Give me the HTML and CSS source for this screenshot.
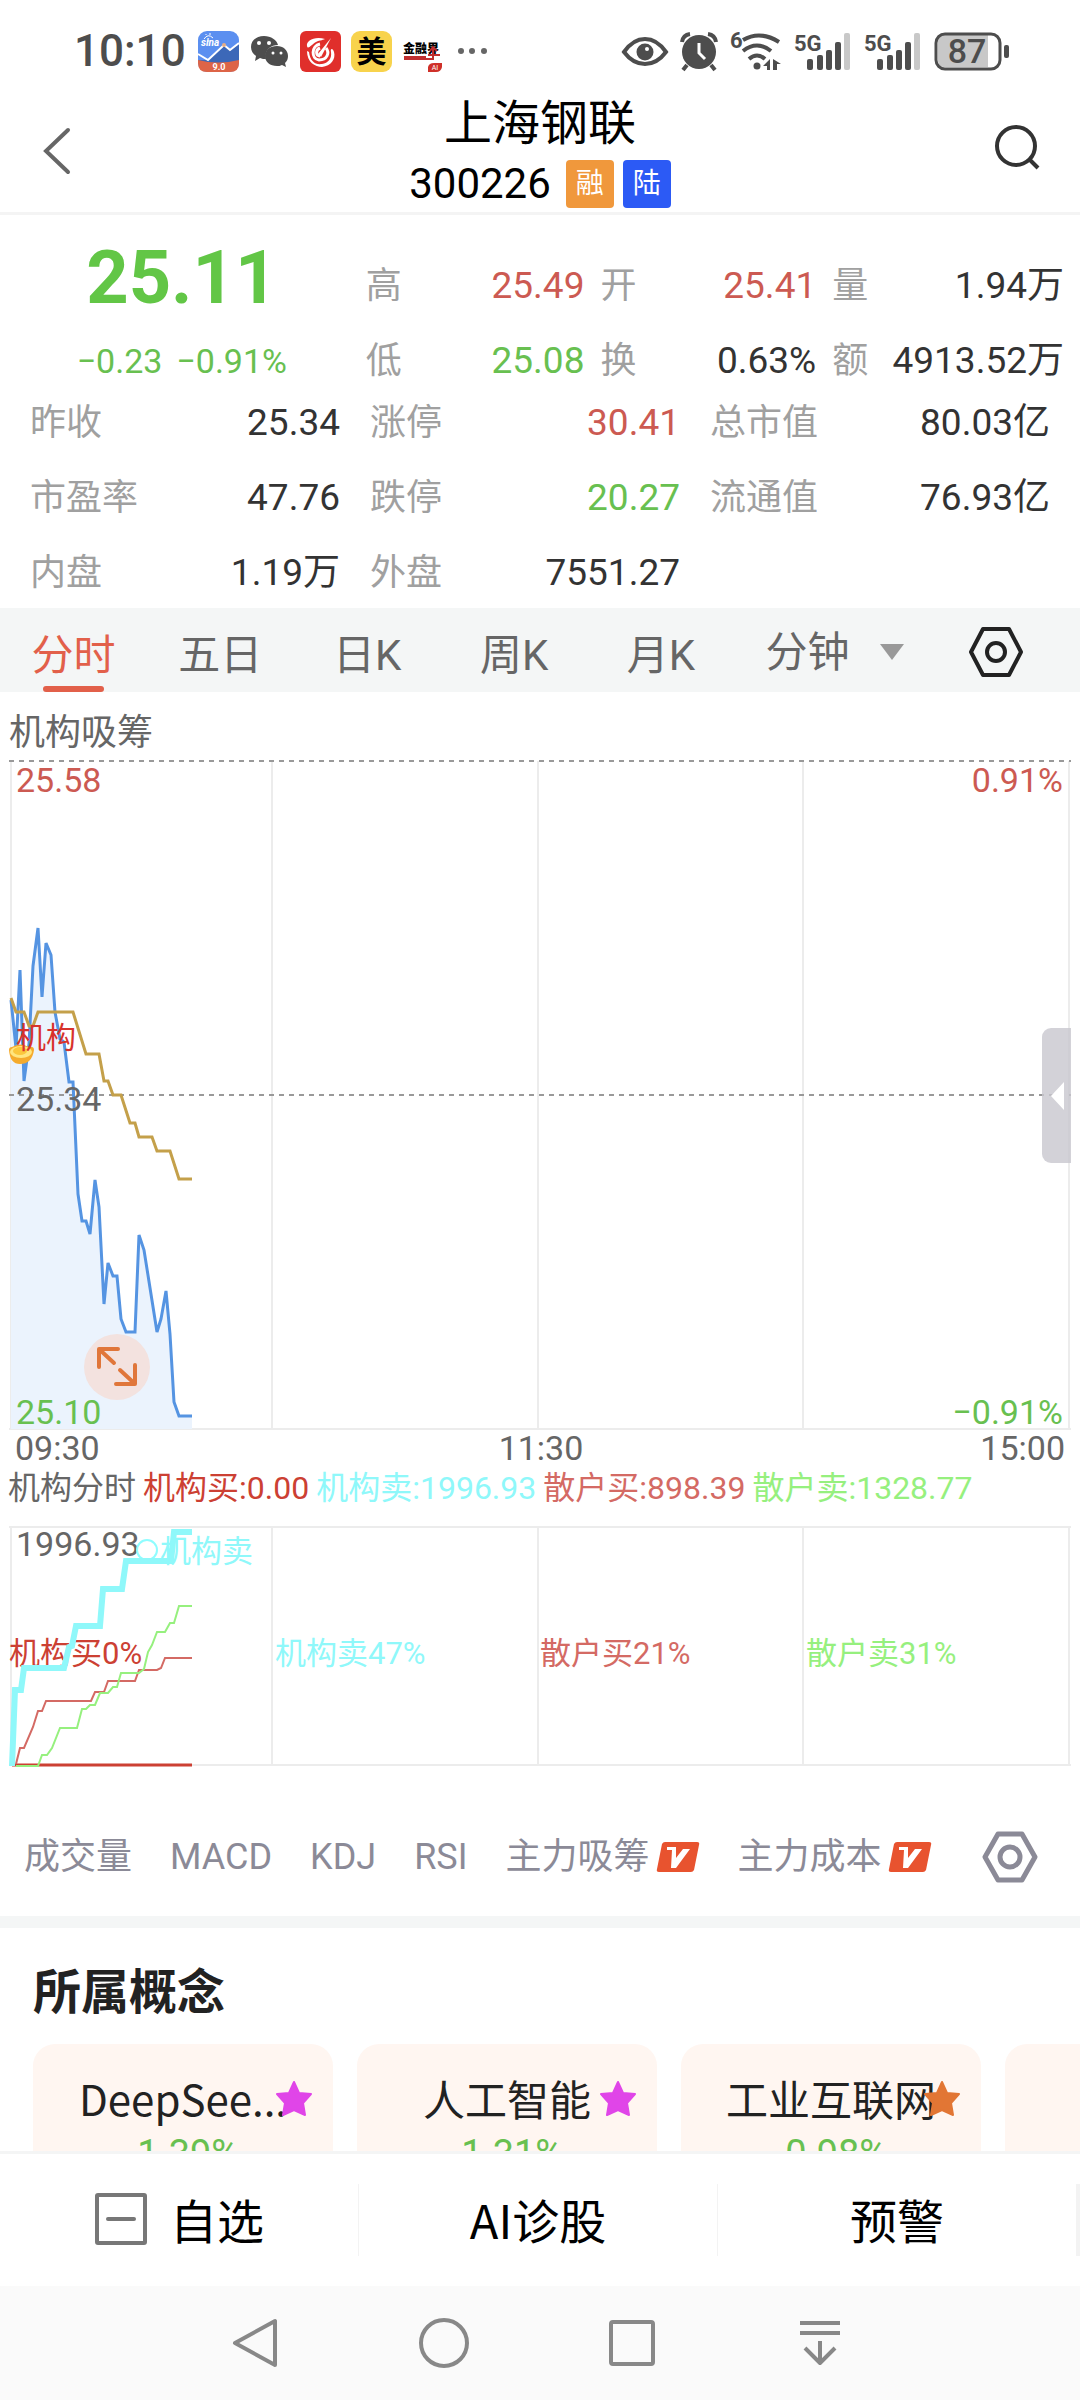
FILE: index.html
```html
<!DOCTYPE html>
<html lang="zh-CN">
<head>
  <meta charset="utf-8" />
  <meta name="viewport" content="width=device-width, initial-scale=1" />
  <title>上海钢联 300226</title>
  <link rel="stylesheet" href="styles.css">
</head>
<body>
  <div class="status-bar">
    <span class="clock">10:10</span>
    <svg class="app" viewBox="0 0 41 41">
      <rect width="41" height="41" rx="9" fill="#5b8ff0"/>
      <path d="M0 29 L10 29 L26 15 L32 19 L41 13 V32 H0z" fill="#3c68b8"/>
      <path d="M0 29 Q20 34 41 29 V32 Q41 41 32 41 H9 Q0 41 0 32z" fill="#dd6447"/>
      <path d="M0 23 L10 29 L26 14 L32 19 L41 12" fill="none" stroke="#fff" stroke-width="2"/>
      <circle cx="26" cy="14" r="2" fill="#e5ad85"/>
      <path d="M6 8 Q10 2 15 7 M10 8v3 M8 4v-1 M12 4v-2" fill="none" stroke="#fff" stroke-width="1"/>
      <text x="3" y="15" class="sina">sina</text>
      <text x="21" y="39" text-anchor="middle" class="ver">9.0</text>
    </svg>
    <svg class="app" viewBox="0 0 41 41">
      <path d="M15 5c-8 0-13 5-13 11 0 4 2 7 5 9l-1 5 5-3c2 1 4 1 6 1-2-8 4-14 12-14C28 9 22 5 15 5z" fill="#4d4d4d"/>
      <path d="M28 15c-7 0-12 4-12 10s5 10 12 10c2 0 3 0 5-1l4 2-1-4c2-2 3-4 3-7 0-6-5-10-11-10z" fill="#4d4d4d"/>
      <g fill="#fff"><circle cx="10" cy="12" r="2"/><circle cx="20" cy="12" r="2"/><circle cx="24" cy="22" r="1.5"/><circle cx="32" cy="22" r="1.5"/></g>
    </svg>
    <svg class="app" viewBox="0 0 41 41">
      <rect width="41" height="41" rx="6" fill="#e02f2b"/>
      <path d="M25 8 C14 5 6 10 7 15 C8 19 11 14 16 11 C20 9 24 9 25 8z" fill="#fff"/>
      <path d="M7 20 C7 31 15 36 22 36 C31 35 36 28 34 21 C33 17 30 17 31 21 C32 28 28 32 22 33 C15 34 10 30 9 21z" fill="#fff"/>
      <path d="M31 7 L21 26 L18 23z" fill="#fff"/>
      <path d="M20 13 C11 15 11 28 19 29 C27 29 30 22 26 17 M20 17 C15 19 16 25 20 25" fill="none" stroke="#fff" stroke-width="3"/>
    </svg>
    <svg class="app" viewBox="0 0 41 41">
      <rect width="41" height="41" rx="9" fill="#f8d34c"/>
      <text x="20.5" y="31" text-anchor="middle" class="mei">美</text>
    </svg>
    <svg class="app" viewBox="0 0 41 41">
      <text x="1" y="22" class="jrj">金融界</text>
      <path d="M2 26H24 M2 28H24 M26 24H38 M31 17V28H24 M28 20l3-4 4 4" fill="none" stroke="#c02f2f" stroke-width="2"/>
      <path d="M26 41V36Q27 32 32 32H40V36Q39 41 34 41z" fill="#cf3029"/>
      <text x="33" y="39" text-anchor="middle" class="ai">AI</text>
    </svg>
    <svg class="more" viewBox="0 0 30 41" fill="#666"><circle cx="4" cy="20" r="3"/><circle cx="15" cy="20" r="3"/><circle cx="27" cy="20" r="3"/></svg>

    <div class="system">
      <svg width="46" height="40" viewBox="0 0 46 40">
        <path d="M2 21 Q11 8 23 8 Q35 8 44 21 Q35 33 23 33 Q11 33 2 21z" fill="none" stroke="#4d4d4d" stroke-width="4"/>
        <circle cx="23" cy="21" r="8.500" fill="#4d4d4d"/><circle cx="25" cy="18" r="2" fill="#fff"/>
      </svg>
      <svg width="38" height="40" viewBox="0 0 38 40">
        <circle cx="19" cy="21" r="17" fill="#4d4d4d"/>
        <path d="M2 11 Q3 4 10 3 M36 11 Q35 4 28 3 M7 34l-4 5 M31 34l4 5" stroke="#4d4d4d" stroke-width="4" fill="none"/>
        <path d="M19 12v10l6 6" fill="none" stroke="#fff" stroke-width="3"/>
      </svg>
      <svg width="52" height="40" viewBox="0 0 52 40">
        <text x="0" y="17" class="net">6</text>
        <g fill="none" stroke="#4d4d4d" stroke-width="4"><path d="M13 9 Q30 -1 49 11"/><path d="M13 20 Q27 9 41 20"/><path d="M19 28 Q27 21 35 28"/></g>
        <circle cx="27" cy="35" r="3.500" fill="#4d4d4d"/>
        <path d="M33 35 L40 28V39H37V35z M43 28 L51 33 H47V39H43z" fill="#4d4d4d"/>
      </svg>
      <svg width="58" height="40" viewBox="0 0 58 40">
        <text x="0" y="20" class="net">5G</text>
        <g fill="#4d4d4d"><rect x="13" y="28" width="6" height="11" rx="2"/><rect x="23" y="24" width="6" height="15" rx="2"/><rect x="32" y="19" width="6" height="20" rx="2"/><rect x="41" y="11" width="6" height="28" rx="2"/></g>
        <rect x="50" y="2" width="6" height="37" rx="2" fill="#c8c8c8"/>
      </svg>
      <svg width="58" height="40" viewBox="0 0 58 40">
        <text x="0" y="20" class="net">5G</text>
        <g fill="#4d4d4d"><rect x="13" y="28" width="6" height="11" rx="2"/><rect x="23" y="24" width="6" height="15" rx="2"/><rect x="32" y="19" width="6" height="20" rx="2"/><rect x="41" y="11" width="6" height="28" rx="2"/></g>
        <rect x="50" y="2" width="6" height="37" rx="2" fill="#c8c8c8"/>
      </svg>
      <svg width="76" height="40" viewBox="0 0 76 40">
        <path d="M10 4H54V36H10Q4 36 4 30V10Q4 4 10 4z" fill="#c8c8c8"/>
        <rect x="2" y="3" width="64" height="35" rx="9" fill="none" stroke="#4d4d4d" stroke-width="3"/>
        <rect x="70" y="14" width="5" height="13" rx="2" fill="#4d4d4d"/>
        <text x="33" y="32" text-anchor="middle" class="battery">87</text>
      </svg>
    </div>
  </div>

  <header class="header">
    <button class="icon-btn" aria-label="返回">
      <svg width="48" height="50" viewBox="0 0 48 50"><path d="M30 4 L8 25 L30 46" fill="none" stroke="#666" stroke-width="4" stroke-linecap="round"/></svg>
    </button>
    <div class="title">
      <h1>上海钢联</h1>
      <div class="code">300226 <span class="badge margin">融</span><span class="badge connect">陆</span></div>
    </div>
    <button class="icon-btn" aria-label="搜索">
      <svg width="48" height="50" viewBox="0 0 48 50" fill="none" stroke="#333" stroke-width="4"><circle cx="22" cy="20" r="19"/><path d="M35 33 L44 42"/></svg>
    </button>
  </header>

  <main class="content">
    <section class="quote">
      <div class="quote-top">
        <div class="price down">25.11</div>
        <div class="stat"><span>高</span><b class="up">25.49</b></div>
        <div class="stat"><span>开</span><b class="up">25.41</b></div>
        <div class="stat"><span>量</span><b>1.94万</b></div>
        <div class="change down"><span>−0.23</span><span>−0.91%</span></div>
        <div class="stat"><span>低</span><b class="down">25.08</b></div>
        <div class="stat"><span>换</span><b>0.63%</b></div>
        <div class="stat"><span>额</span><b>4913.52万</b></div>
      </div>
      <div class="quote-more">
        <div class="stat"><span>昨收</span><b>25.34</b></div>
        <div class="stat"><span>涨停</span><b class="up">30.41</b></div>
        <div class="stat"><span>总市值</span><b>80.03亿</b></div>
        <div class="stat"><span>市盈率</span><b>47.76</b></div>
        <div class="stat"><span>跌停</span><b class="down">20.27</b></div>
        <div class="stat"><span>流通值</span><b>76.93亿</b></div>
        <div class="stat"><span>内盘</span><b>1.19万</b></div>
        <div class="stat"><span>外盘</span><b>7551.27</b></div>
      </div>
    </section>

    <nav class="tabs">
      <button class="tab active">分时</button>
      <button class="tab">五日</button>
      <button class="tab">日K</button>
      <button class="tab">周K</button>
      <button class="tab">月K</button>
      <div class="tab-tools">
        <label class="minutes">
          <select aria-label="分钟"><option>分钟</option></select>
          <svg width="24" height="16" viewBox="0 0 24 16"><path d="M0 0H24L12 16z" fill="#999"/></svg>
        </label>
        <button class="icon-btn" aria-label="图表设置">
          <svg width="56" height="52" viewBox="0 0 56 52" fill="none" stroke="#222" stroke-width="4" stroke-linejoin="round"><path d="M15 3H41L53 26L41 49H15L3 26z"/><circle cx="28" cy="26" r="9"/></svg>
        </button>
      </div>
    </nav>

    <p class="chart-name">机构吸筹</p>
    <div class="chart">
      <svg class="plot" viewBox="0 756 1080 714">
        <g class="grid"><path d="M11 761V1429 M272 761V1429 M538 761V1429 M803 761V1429 M1069 761V1429 M9 1429H1071"/></g>
        <path class="area" d="M11 1000 16 1048 20 970 24 1081 29 1044 33 966 38 928 42 997 46 943 51 955 55 1012 60 1039 64 1042 69 1082 73 1082 78 1194 82 1221 86 1221 90 1234 95 1180 99 1207 104 1304 108 1263 113 1276 117 1276 121 1319 126 1332 135 1332 139 1235 144 1250 157 1332 161 1319 166 1291 170 1334 174 1402 179 1416 192 1416V1429H11z"/>
        <path class="dash" d="M9 761H1071 M9 1095H1071"/>
        <path class="line-price" d="M11 1000 16 1048 20 970 24 1081 29 1044 33 966 38 928 42 997 46 943 51 955 55 1012 60 1039 64 1042 69 1082 73 1082 78 1194 82 1221 86 1221 90 1234 95 1180 99 1207 104 1304 108 1263 113 1276 117 1276 121 1319 126 1332 135 1332 139 1235 144 1250 157 1332 161 1319 166 1291 170 1334 174 1402 179 1416 192 1416"/>
        <path class="line-avg" d="M11 998 16 1012 24 1012 29 1026 33 1026 38 1012 73 1012 86 1054 99 1054 104 1081 108 1081 113 1095 121 1095 130 1123 135 1123 139 1137 152 1137 157 1151 170 1151 179 1179 192 1179"/>
        <!-- gold ingot marker -->
        <path d="M9 1050 Q10 1064 20 1064 Q32 1064 34 1050 Q34 1046 29 1047 Q20 1042 12 1047 Q9 1047 9 1050z" fill="#f5ab2c"/>
        <ellipse cx="21" cy="1052" rx="11" ry="6" fill="#ffe680"/>
        <ellipse cx="20" cy="1051" rx="7" ry="4" fill="#fbc73c"/>
        <text class="mark" x="16" y="1048">机构</text>
        <text class="tick up" x="16" y="792">25.58</text>
        <text class="tick up" x="1063" y="792" text-anchor="end">0.91%</text>
        <text class="tick" x="16" y="1111">25.34</text>
        <text class="tick down" x="16" y="1424">25.10</text>
        <text class="tick down" x="1063" y="1424" text-anchor="end">−0.91%</text>
        <text class="tick" x="15" y="1460">09:30</text>
        <text class="tick" x="541" y="1460" text-anchor="middle">11:30</text>
        <text class="tick" x="1065" y="1460" text-anchor="end">15:00</text>
      </svg>
      <button class="expand" aria-label="全屏">
        <svg width="66" height="66" viewBox="0 0 66 66" fill="none" stroke="#e0763a" stroke-width="4" stroke-linecap="round" stroke-linejoin="round"><path d="M15 33V15H34 M16 16L30 29 M51 31V50H32 M50 49L36 36"/></svg>
      </button>
      <button class="drawer" aria-label="展开侧栏">
        <svg width="13" height="28" viewBox="0 0 13 28"><path d="M0 14L13 0V28z" fill="#fff"/></svg>
      </button>
    </div>

    <div class="legend">
      <span>机构分时</span>
      <span class="inst-buy">机构买:0.00</span>
      <span class="inst-sell">机构卖:1996.93</span>
      <span class="retail-buy">散户买:898.39</span>
      <span class="retail-sell">散户卖:1328.77</span>
    </div>
    <svg class="plot" viewBox="0 1506 1080 274">
      <g class="grid"><path d="M11 1527V1765 M272 1527V1765 M538 1527V1765 M803 1527V1765 M1069 1527V1765 M9 1527H1071 M9 1765H1071"/></g>
      <g class="share">
        <text class="inst-buy" x="9" y="1664">机构买0%</text>
        <text class="inst-sell" x="275" y="1664">机构卖47%</text>
        <text class="retail-buy" x="540" y="1664">散户买21%</text>
        <text class="retail-sell" x="806" y="1664">散户卖31%</text>
        <text class="inst-sell" x="160" y="1562">机构卖</text>
      </g>
      <text class="tick" x="16" y="1556">1996.93</text>
      <circle cx="147" cy="1550" r="10" fill="none" stroke="#8ffdff" stroke-width="2"/>
      <path class="flow inst-buy thick" d="M12 1765H192"/>
      <path class="flow retail-buy" d="M16 1764 20 1748 24 1748 33 1727 38 1711 42 1711 46 1701 91 1701 95 1692 104 1692 108 1681 135 1681 139 1670 157 1670 161 1668 165 1658 192 1658"/>
      <path class="flow retail-sell" d="M16 1766H38L42 1755 47 1755 52 1748 60 1728 77 1728 82 1709 86 1709 90 1705 95 1705 100 1693 108 1693 113 1687 117 1687 121 1673 139 1673 144 1669 148 1652 152 1645 157 1632 165 1632 170 1623 174 1623 179 1606 192 1606"/>
      <path class="flow inst-sell heavy" d="M12 1766 15 1690 21 1690 24 1668 64 1668 69 1647 72 1646 76 1626 100 1626 103 1589 122 1589 126 1561 171 1561 174 1532 192 1532"/>
    </svg>

    <nav class="indicators">
      <button>成交量</button>
      <button>MACD</button>
      <button>KDJ</button>
      <button>RSI</button>
      <button>主力吸筹<svg width="44" height="32" viewBox="0 0 44 32"><path d="M9 1H41Q44 1 43 4L38 29Q37 31 35 31H3Q0 31 1 28L6 3Q7 1 9 1z" fill="#e8532f"/><path d="M11 6H20V17L27 8H34L20 27H15L16 9H11z" fill="#fff"/></svg></button>
      <button>主力成本<svg width="44" height="32" viewBox="0 0 44 32"><path d="M9 1H41Q44 1 43 4L38 29Q37 31 35 31H3Q0 31 1 28L6 3Q7 1 9 1z" fill="#e8532f"/><path d="M11 6H20V17L27 8H34L20 27H15L16 9H11z" fill="#fff"/></svg></button>
      <button class="settings" aria-label="指标设置">
        <svg width="56" height="52" viewBox="0 0 56 52" fill="none" stroke="#8b8a97" stroke-width="5" stroke-linejoin="round"><path d="M16 3H40L53 26L40 49H16L3 26z"/><circle cx="28" cy="26" r="10"/></svg>
      </button>
    </nav>

    <section class="concepts">
      <h2>所属概念</h2>
      <div class="cards">
        <a class="card" href="#"><span>DeepSee...</span><b class="down">-1.39%</b>
          <svg class="star" viewBox="0 0 36 36"><path d="M18 1L23 12L35 13L27 22L29 34L18 29L7 34L9 22L1 13L13 12z" fill="#e045e8" stroke="#e045e8" stroke-width="2" stroke-linejoin="round"/></svg></a>
        <a class="card" href="#"><span>人工智能</span><b class="down">-1.31%</b>
          <svg class="star" viewBox="0 0 36 36"><path d="M18 1L23 12L35 13L27 22L29 34L18 29L7 34L9 22L1 13L13 12z" fill="#e045e8" stroke="#e045e8" stroke-width="2" stroke-linejoin="round"/></svg></a>
        <a class="card" href="#"><span>工业互联网</span><b class="down">-0.98%</b>
          <svg class="star" viewBox="0 0 36 36"><path d="M18 1L23 12L35 13L27 22L29 34L18 29L7 34L9 22L1 13L13 12z" fill="#e27634" stroke="#e27634" stroke-width="2" stroke-linejoin="round"/></svg></a>
        <a class="card" href="#" aria-label="更多概念"></a>
      </div>
    </section>
  </main>

  <div class="actions">
    <button>
      <svg width="54" height="54" viewBox="0 0 54 54" fill="none" stroke="#777" stroke-width="4"><rect x="3" y="3" width="48" height="48" rx="1"/><path d="M14 27H40" stroke-linecap="round"/></svg>
      自选
    </button>
    <button>AI诊股</button>
    <button>预警</button>
  </div>

  <div class="system-nav">
    <button aria-label="后退"><svg width="52" height="52" viewBox="0 0 52 52"><path d="M45 4V48L5 26z"/></svg></button>
    <button aria-label="主页"><svg width="52" height="52" viewBox="0 0 52 52"><circle cx="26" cy="26" r="23"/></svg></button>
    <button aria-label="最近任务"><svg width="52" height="52" viewBox="0 0 52 52"><rect x="5" y="5" width="42" height="42" rx="2"/></svg></button>
    <button aria-label="下拉通知"><svg width="52" height="52" viewBox="0 0 52 52"><path d="M6 6H46 M6 16H46 M26 24V46 M11 31L26 46L41 31"/></svg></button>
  </div>
</body>
</html>
```
FILE: styles.css
```css
* {
  box-sizing: border-box;
}
body {
  margin: 0;
  height: 100vh;
  display: flex;
  flex-direction: column;
  background: #fff;
  color: #333;
  font-family: Roboto, "Noto Sans CJK SC", sans-serif;
}
button,
select {
  padding: 0;
  border: none;
  background: none;
  color: inherit;
  font: inherit;
  cursor: pointer;
}
svg {
  display: block;
  flex: none;
  overflow: visible;
}
.up {
  color: #cc5a52;
  fill: #cc5a52;
}
.down {
  color: #68c050;
  fill: #68c050;
}

/* status bar */
.status-bar {
  display: flex;
  align-items: center;
  gap: 10px;
  height: 100px;
  padding: 2px 70px 0 74px;
}
.clock {
  margin-right: 2px;
  font-size: 44px;
  font-weight: 500;
  color: #4d4d4d;
}
.app {
  width: 41px;
  height: 41px;
}
.more {
  width: 30px;
  height: 41px;
  margin-left: 4px;
}
.sina {
  font-size: 10px;
  font-weight: bold;
  font-style: italic;
  fill: #fff;
}
.ver {
  font-size: 9px;
  font-weight: bold;
  fill: #fff;
}
.mei {
  font-size: 30px;
  font-weight: bold;
}
.jrj {
  font-size: 12px;
  font-weight: 900;
}
.ai {
  font-size: 7px;
  fill: #fff;
}
.net {
  font-size: 22px;
  font-weight: bold;
  fill: #4d4d4d;
}
.battery {
  font-size: 34px;
  font-weight: 500;
  fill: #4d4d4d;
}
.system {
  display: flex;
  gap: 12px;
  margin-left: auto;
}

/* header */
.header {
  display: flex;
  align-items: flex-start;
  justify-content: space-between;
  padding: 0 38px 2px;
  border-bottom: 3px solid #f4f4f4;
}
.icon-btn {
  line-height: 0;
}
.header .icon-btn {
  margin-top: 26px;
}
.title {
  text-align: center;
}
.title h1 {
  margin: 0;
  font-size: 48px;
  font-weight: 400;
  line-height: 48px;
  color: #000;
}
.code {
  display: flex;
  align-items: center;
  justify-content: center;
  gap: 9px;
  margin-top: 10px;
  font-size: 42px;
  line-height: 52px;
  color: #000;
}
.badge {
  width: 48px;
  height: 48px;
  border-radius: 4px;
  font-size: 28px;
  line-height: 48px;
  color: #fff;
}
.badge.margin {
  margin-left: 6px;
  background: #f0983c;
}
.badge.connect {
  background: #2c5af5;
}

/* scrolled area between the header and the action bar */
.content {
  flex: 1;
  min-height: 0;
  overflow: hidden;
}

.quote {
  padding: 46px 0 10px;
  font-size: 36px;
  line-height: 50px;
}
.quote-top {
  display: grid;
  grid-template-columns: 350fr 219fr 216fr 232fr;
  gap: 25px 16px;
  padding-right: 16px;
}
.quote-more {
  display: grid;
  grid-template-columns: 31fr 31fr 34fr;
  gap: 25px 30px;
  margin-top: 12px;
  padding: 0 30px;
}
.stat {
  display: flex;
  justify-content: space-between;
  height: 50px;
  white-space: nowrap;
}
.stat span {
  color: #a0a0a0;
}
.stat b {
  font-size: 37px;
  font-weight: 400;
}
.price {
  padding-left: 14px;
  text-align: center;
  font-size: 74px;
  font-weight: 700;
  line-height: 34px;
  color: #62c646;
}
.change {
  display: flex;
  justify-content: center;
  gap: 14px;
  padding-left: 14px;
  font-size: 34px;
}

.tabs {
  display: flex;
  background: #f4f6f6;
  color: #666;
  font-size: 42px;
}
.tab {
  position: relative;
  flex: 1;
  height: 84px;
  padding-top: 2px;
}
.tab.active {
  color: #e2604a;
}
.tab.active::after {
  content: "";
  position: absolute;
  left: 43px;
  right: 43px;
  bottom: 0;
  height: 6px;
  border-radius: 3px;
  background: #e2604a;
}
.tab-tools {
  flex: 0 0 32%;
  display: flex;
  align-items: center;
  justify-content: space-between;
  padding: 4px 56px 0 31px;
}
.minutes {
  display: flex;
  align-items: center;
  gap: 30px;
}
.minutes select {
  appearance: none;
  line-height: 60px;
  padding-top: 2px;
}

/* price chart */
.chart-name {
  margin: 0;
  padding: 16px 9px 0;
  height: 64px;
  font-size: 36px;
  line-height: 50px;
  color: #666;
}
.chart {
  position: relative;
}
.plot {
  width: 100%;
}
.grid path {
  fill: none;
  stroke: #ececec;
  stroke-width: 2;
}
.dash {
  stroke: #999;
  stroke-width: 2;
  stroke-dasharray: 5 5;
}
.area {
  fill: #ebf3fd;
}
.line-price,
.line-avg {
  fill: none;
  stroke: #5594e2;
  stroke-width: 3;
}
.line-avg {
  stroke: #c4a04a;
}
.mark {
  font-size: 30px;
  fill: #d8322c;
}
.tick {
  font-size: 34px;
}
.tick:not(.up):not(.down) {
  fill: #666;
}
.expand {
  position: absolute;
  left: 84px;
  top: 578px;
  border-radius: 50%;
  background: #f3e2df;
}
.drawer {
  position: absolute;
  right: 9px;
  top: 272px;
  width: 29px;
  height: 135px;
  padding-left: 9px;
  border-radius: 9px 0 0 9px;
  background: rgba(200, 199, 206, 0.8);
}

/* capital flow chart */
.legend {
  display: flex;
  gap: 7px;
  padding-left: 8px;
  font-size: 32px;
  line-height: 36px;
  color: #666;
  white-space: nowrap;
}
.inst-buy {
  color: #cc4033;
}
.inst-sell {
  color: #8ff8fa;
}
.retail-buy {
  color: #d46a64;
}
.retail-sell {
  color: #96f07e;
}
.share {
  font-size: 31px;
}
.share text {
  fill: currentColor;
}
.flow {
  fill: none;
  stroke: currentColor;
  stroke-width: 2;
}
.flow.thick {
  stroke-width: 3;
}
.flow.heavy {
  stroke-width: 6;
}

.indicators {
  display: flex;
  align-items: center;
  gap: 38px;
  padding: 51px 42px 33px 24px;
  border-bottom: 12px solid #f4f6f6;
  font-size: 36px;
  line-height: 52px;
  color: #8b8a97;
  white-space: nowrap;
}
.indicators button {
  display: flex;
  align-items: center;
  gap: 6px;
}
.indicators .settings {
  margin-left: auto;
}

.concepts h2 {
  margin: 35px 33px 21px;
  font-size: 48px;
  font-weight: 700;
  line-height: 60px;
  color: #222;
}
.cards {
  display: flex;
  gap: 24px;
  padding-left: 33px;
}
.card {
  position: relative;
  flex: none;
  width: 300px;
  height: 160px;
  padding-top: 26px;
  border-radius: 22px;
  background: #fff6f1;
  color: #222;
  text-align: center;
  text-decoration: none;
}
.card span {
  display: block;
  font-family: "Noto Sans CJK SC", sans-serif;
  font-size: 42px;
  line-height: 56px;
}
.card b {
  display: block;
  margin-top: 4px;
  font-size: 38px;
  font-weight: 400;
  line-height: 48px;
}
.star {
  position: absolute;
  right: 21px;
  top: 37px;
  width: 36px;
}

/* bottom bars */
.actions {
  display: flex;
  align-items: center;
  height: 135px;
  border-top: 3px solid #f4f5f5;
  font-family: "Noto Sans CJK SC", sans-serif;
  font-size: 47px;
  line-height: 60px;
  color: #000;
}
.actions button {
  flex: 1;
  display: flex;
  align-items: center;
  justify-content: center;
  gap: 22px;
  height: 72px;
  padding-bottom: 2px;
  border-right: 1px solid #f3f3f3;
}
.actions button:last-child {
  border-right-width: 4px;
}
.system-nav {
  display: flex;
  align-items: center;
  justify-content: center;
  gap: 136px;
  height: 114px;
  padding-right: 4px;
  background: #fafafa;
}
.system-nav svg {
  fill: none;
  stroke: #888;
  stroke-width: 4;
  stroke-linejoin: round;
}
```
